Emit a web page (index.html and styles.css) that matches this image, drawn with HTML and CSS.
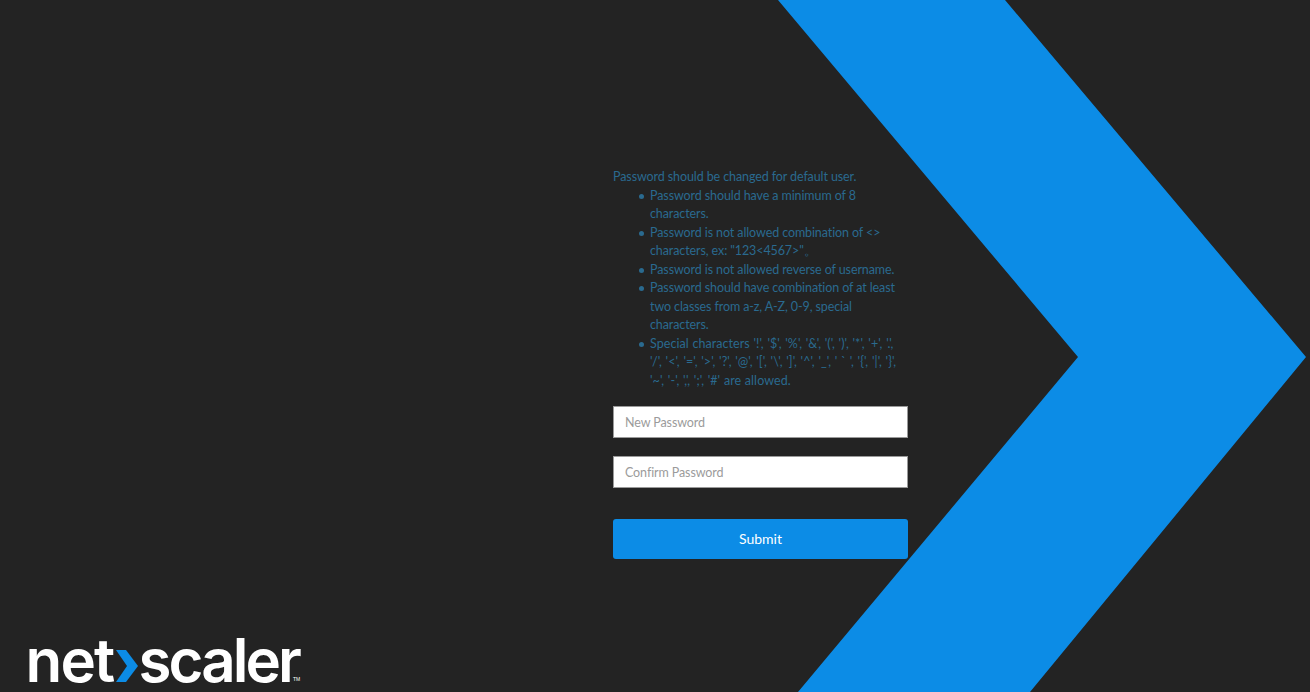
FILE: index.html
```html
<!DOCTYPE html>
<html lang="en">
<head>
<meta charset="utf-8">
<title>NetScaler</title>
<link rel="stylesheet" href="styles.css">
</head>
<body>
<div class="page">
  <svg class="chevron" viewBox="0 0 1310 692" width="1310" height="692" aria-hidden="true"><polygon points="778,0 1005,0 1306,357 1030,692 798,692 1078,357" fill="#0c8ce6"/></svg>
  <main class="panel">
    <div class="rules">
      Password should be changed for default user.
      <ul>
        <li>Password should have a minimum of 8 characters.</li>
        <li>Password is not allowed combination of &lt;&gt; characters, ex: "123&lt;4567&gt;"。</li>
        <li>Password is not allowed reverse of username.</li>
        <li>Password should have combination of at least two classes from a-z, A-Z, 0-9, special characters.</li>
        <li class="rule-wide">Special characters '!', '$', '%', '&amp;', '(', ')', '*', '+', '.', '/', '&lt;', '=', '&gt;', '?', '@', '[', '\', ']', '^', '_', ' ` ', '{', '|', '}', '~', '-', ',', ';', '#' are allowed.</li>
      </ul>
    </div>
    <form class="form">
      <input class="field" type="password" placeholder="New Password">
      <input class="field" type="password" placeholder="Confirm Password">
      <button class="submit" type="button">Submit</button>
    </form>
  </main>
  <footer class="logo">
    <span class="logo-word logo-net">net</span>
    <svg class="logo-mark" viewBox="0 0 22 32" width="22" height="32" aria-hidden="true"><polygon points="0,0 10,0 22,16 10,32 0,32 11,16" fill="#0c8ce6"/></svg>
    <span class="logo-word logo-scaler">scaler</span>
    <span class="logo-tm">TM</span>
  </footer>
</div>
</body>
</html>
```
FILE: styles.css
```css
* { box-sizing: border-box; }
html, body { margin: 0; padding: 0; height: 100%; background: #232323; }
body { font-family: "Lato", "Noto Sans", sans-serif; overflow: hidden; }
.page { position: relative; width: 1310px; height: 692px; display: flex; flex-direction: column; overflow: hidden; background: #232323; }
.chevron { position: absolute; top: 0; left: 0; }
.panel { position: relative; width: 295px; margin-left: 613px; padding-top: 168px; }
.rules { font-size: 12.5px; letter-spacing: -0.1px; line-height: 18.55px; color: #2a6a8f; }
.rules ul { margin: 0; padding: 0 0 0 37px; list-style: none; }
.rules li { position: relative; }
.rules li::before { content: ""; position: absolute; left: -11.5px; top: 7px; width: 5px; height: 5px; border-radius: 50%; background: #2a6a8f; }
.rules .rule-wide { letter-spacing: 0.06px; word-spacing: 0.4px; }
.form { display: flex; flex-direction: column; margin-top: 15px; }
.field { height: 32px; width: 100%; border: 1px solid #9a9a9a; border-radius: 0; background: #fff; padding: 1px 11px 0; font: 12.5px "Lato", sans-serif; letter-spacing: -0.1px; color: #333; margin-bottom: 18px; outline: none; }
.field::placeholder { color: #9b9b9b; opacity: 1; }
.submit { margin-top: 13px; height: 40px; width: 100%; border: 0; border-radius: 3px; background: #0c8ce6; color: #fff; font: 14px "Lato", sans-serif; }
.logo { position: relative; margin-top: auto; display: flex; align-items: flex-end; padding: 0 0 6px 25.5px; color: #fff; }
.logo-word { font: 600 60px/60px "Inter", "Liberation Sans", sans-serif; margin-bottom: -4px; }
.logo-net { letter-spacing: -1.8px; }
.logo-scaler { letter-spacing: -2.9px; }
.logo-mark { margin: 0 0 4px 3px; flex: none; }
.logo-tm { position: absolute; left: 293px; bottom: 10px; font: 5px/6px "Liberation Sans", sans-serif; }
```
